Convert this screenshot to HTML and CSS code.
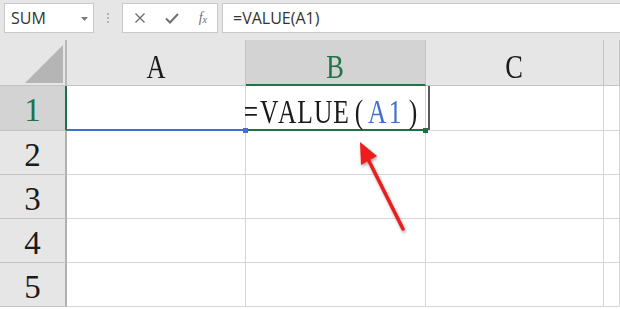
FILE: index.html
```html
<!DOCTYPE html>
<html lang="en">
<head>
  <meta charset="UTF-8">
  <title>VALUE</title>
  <link rel="stylesheet" href="styles.css">
</head>
<body>
  <div class="page">
    <div class="toolbar">
      <div class="namebox">
        <span>SUM</span>
        <svg class="caret" width="7" height="4" viewBox="0 0 7 4"><path d="M0 0h7L3.5 4z" fill="#7b7b7b"/></svg>
      </div>
      <div class="grip"><i></i><i></i><i></i></div>
      <div class="fxbox">
        <svg width="12" height="12" viewBox="0 0 12 12"><path d="M1.5 1.5l9 9M10.5 1.5l-9 9" stroke="#6f6f6f" stroke-width="1.4"/></svg>
        <svg width="14" height="11" viewBox="0 0 14 11"><path d="M1 5.5l4 4L13 1" stroke="#6f6f6f" stroke-width="2" fill="none"/></svg>
        <span class="fx">f<sub>x</sub></span>
      </div>
      <div class="formula">=VALUE(A1)</div>
    </div>

    <div class="sheet">
      <div class="corner"><span class="tri"></span></div>
      <div class="colhead"><span class="lbl">A</span></div>
      <div class="colhead active"><span class="lbl">B</span></div>
      <div class="colhead"><span class="lbl">C</span></div>
      <div class="colhead"></div>

      <div class="rowhead active">1</div>
      <div class="cell ref"></div>
      <div class="cell current">
        <span class="edit">
          <span class="ch">=</span><span class="ch">V</span><span class="ch">A</span><span class="ch">L</span><span class="ch">U</span><span class="ch">E</span><span class="ch">(</span><span class="ch blue">A</span><span class="ch blue">1</span><span class="ch">)</span>
        </span>
      </div>
      <div class="cell edge"></div>
      <div class="cell"></div>

      <div class="rowhead">2</div>
      <div class="cell"></div><div class="cell"></div><div class="cell"></div><div class="cell"></div>
      <div class="rowhead">3</div>
      <div class="cell"></div><div class="cell"></div><div class="cell"></div><div class="cell"></div>
      <div class="rowhead">4</div>
      <div class="cell"></div><div class="cell"></div><div class="cell"></div><div class="cell"></div>
      <div class="rowhead">5</div>
      <div class="cell"></div><div class="cell"></div><div class="cell"></div><div class="cell"></div>
    </div>

    <svg class="arrow" width="620" height="309" viewBox="0 0 620 309">
      <line x1="403" y1="229" x2="367" y2="157" stroke="#ee1c1c" stroke-width="3.5" stroke-linecap="round"/>
      <polygon points="360,142 361,165 377,156" fill="#ee1c1c"/>
    </svg>
  </div>
</body>
</html>
```

FILE: styles.css
```css
body {
  margin: 0;
  background: #ffffff;
  overflow: hidden;
}
.page {
  position: relative;
  width: 620px;
  height: 309px;
}
.toolbar {
  display: flex;
  align-items: flex-start;
  height: 40px;
  padding: 3px 0 0 4px;
  box-sizing: border-box;
  background: #e6e6e6;
  font-family: "Open Sans", "Noto Sans", sans-serif;
  color: #333333;
}
.namebox {
  display: flex;
  align-items: center;
  justify-content: space-between;
  width: 90px;
  height: 30px;
  padding: 0 5px 0 6px;
  box-sizing: border-box;
  background: #ffffff;
  border: 1px solid #c9c9c9;
  font-size: 16px;
}
.caret {
  margin-top: 1px;
}
.grip {
  display: flex;
  flex-direction: column;
  align-items: center;
  gap: 2px;
  width: 28px;
  padding-top: 10px;
}
.grip i {
  width: 2px;
  height: 2px;
  background: #b4b4b4;
}
.fxbox {
  display: flex;
  align-items: center;
  justify-content: space-between;
  width: 96px;
  height: 30px;
  padding: 0 10px 0 11px;
  box-sizing: border-box;
  background: #ffffff;
  border: 1px solid #c9c9c9;
}
.fx {
  font-family: "Liberation Serif", serif;
  font-style: italic;
  font-size: 14px;
  color: #6f6f6f;
}
.fx sub {
  font-size: 10px;
  vertical-align: -1px;
}
.formula {
  flex: 1;
  height: 30px;
  margin-left: 4px;
  padding-left: 10px;
  box-sizing: border-box;
  background: #ffffff;
  border: 1px solid #c9c9c9;
  border-right: none;
  font-size: 16px;
  line-height: 28px;
}

.sheet {
  display: grid;
  grid-template-columns: 67px 179px 180px 178px 1fr;
  grid-template-rows: 46px 45px 44px 44px 44px 44px;
  font-family: "Liberation Serif", "Times New Roman", serif;
  color: #1a1a1a;
}
.sheet > div {
  box-sizing: border-box;
  border-right: 1px solid #d6d6d6;
  border-bottom: 1px solid #d6d6d6;
}
.corner {
  display: flex;
  align-items: flex-end;
  justify-content: flex-end;
  padding: 0 2px 2px 0;
  background: #e6e6e6;
  border-right: 2px solid #b9b9b9 !important;
  border-bottom-color: #c4c4c4 !important;
}
.tri {
  width: 0;
  height: 0;
  border-left: 38px solid transparent;
  border-bottom: 38px solid #b5b5b5;
}
.colhead {
  background: #e6e6e6;
  text-align: center;
  border-right-color: #c4c4c4 !important;
  border-bottom-color: #c4c4c4 !important;
}
.colhead .lbl {
  display: inline-block;
  padding-top: 11px;
  font-size: 33px;
  line-height: 33px;
  transform: scaleX(0.8);
}
.colhead.active {
  background: #d3d3d3;
  color: #217346;
  border-bottom: 2px solid #217346 !important;
}
.rowhead {
  background: #e6e6e6;
  text-align: center;
  padding-top: 8px;
  font-size: 33px;
  line-height: 33px;
  border-right: 2px solid #b0b0b0 !important;
  border-bottom-color: #c4c4c4 !important;
}
.rowhead.active {
  background: #d3d3d3;
  color: #217346;
  border-right-color: #217346 !important;
}
.cell {
  position: relative;
  background: #ffffff;
}
.cell.ref {
  border-bottom: 2px solid #3c70d2 !important;
}
.cell.current {
  display: flex;
  justify-content: flex-end;
  padding: 9px 3px 0 0;
  border-bottom: 2px solid #1e7145 !important;
}
.cell.ref::after,
.cell.current::after {
  content: "";
  position: absolute;
  right: -3px;
  bottom: -4px;
  width: 5px;
  height: 5px;
  background: #3c70d2;
  z-index: 2;
}
.cell.current::after {
  background: #1e7145;
}
.cell.edge {
  box-shadow: inset 2px 0 0 #ffffff, inset 4px 0 0 #5a5a5a;
}
.edit {
  display: flex;
  font-size: 34px;
  line-height: 34px;
  white-space: nowrap;
  transform: scaleX(0.75);
  transform-origin: right center;
}
.ch {
  width: 24px;
  text-align: center;
}
.ch.blue {
  color: #3f6fce;
}
.arrow {
  position: absolute;
  top: 0;
  left: 0;
  pointer-events: none;
  filter: drop-shadow(1px 2px 1.5px rgba(0, 0, 0, 0.35));
}
```
